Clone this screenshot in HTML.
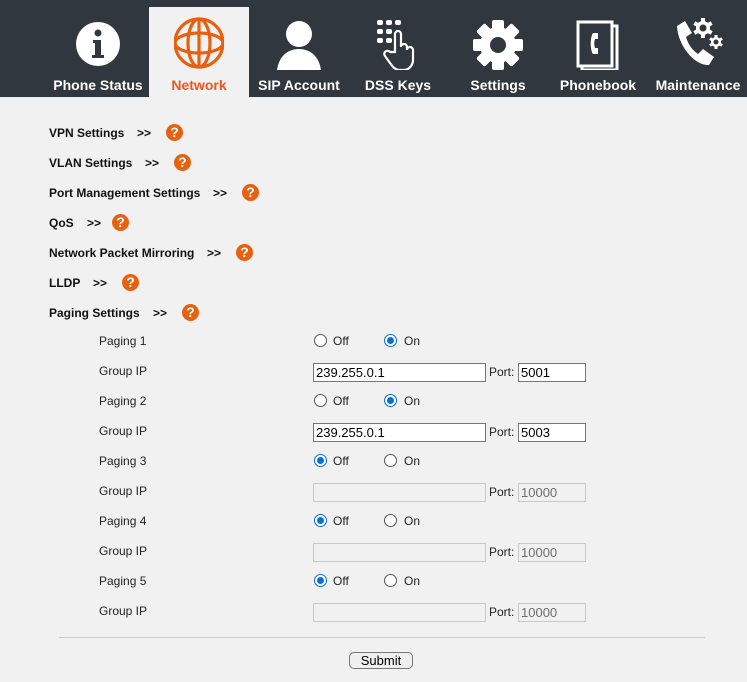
<!DOCTYPE html>
<html><head><meta charset="utf-8"><style>
*{margin:0;padding:0;box-sizing:border-box}
body{width:747px;height:682px;background:#f1f1f1;font-family:"Liberation Sans",Arial,sans-serif;position:relative;overflow:hidden}
.hdr{position:absolute;left:0;top:0;width:747px;height:97px;background:#31373f}
.tab{position:absolute;top:7px;width:100px;height:90px;text-align:center}
.tab.act{background:#f1f1f1}
.tab .lb{position:absolute;left:-10px;right:-10px;top:70px;font-size:14px;font-weight:bold;color:#fff}
.tab.act .lb{color:#f2561d}
.tab svg{position:absolute;left:25px;top:7px}
.a{position:absolute;white-space:nowrap}
.lk{font-size:12px;font-weight:bold;color:#111}
.q{position:absolute;width:17px;height:17px;border-radius:50%;background:#e9600f;color:#fff;font-weight:bold;font-size:14px;text-align:center;line-height:17px}
.lbl{font-size:12px;color:#222}
.r{position:absolute;width:13px;height:13px;border-radius:50%;border:1px solid #555;background:#fff}
.r.on{border:1px solid #0a6fd4}
.r.on::after{content:"";position:absolute;left:2px;top:2px;width:7px;height:7px;border-radius:50%;background:#0a6fd4}
.in{position:absolute;height:19px;border:1px solid #767676;background:#fff;font-size:13px;padding-left:2px;line-height:17px;color:#000}
.in.dis{border-color:#c8c8c8;background:#f0f0f0;color:#6d6d6d}
</style></head><body>
<div class="hdr">
<div class="tab" style="left:48px"><svg width="50" height="56" viewBox="0 0 50 56"><circle cx="25" cy="30" r="22" fill="#fff"/><circle cx="25" cy="19" r="3.5" fill="#31373f"/><path d="M20 26h8v15h3v3H19v-3h3V29h-2z" fill="#31373f"/></svg><div class="lb">Phone Status</div></div>
<div class="tab act" style="left:149px"><svg width="50" height="56" viewBox="0 0 50 56"><g fill="none" stroke="#e8600f" stroke-width="3.2"><circle cx="25" cy="34" r="24" transform="translate(0,-5)"/><ellipse cx="25" cy="29" rx="11" ry="24"/><ellipse cx="25" cy="29" rx="24" ry="10"/><line x1="25" y1="5" x2="25" y2="53"/></g></svg><div class="lb">Network</div></div>
<div class="tab" style="left:249px"><svg width="50" height="56" viewBox="0 0 50 56"><circle cx="25" cy="20" r="13" fill="#fff"/><path d="M3 56c2-14 11-21 22-21s20 7 22 21z" fill="#fff"/></svg><div class="lb">SIP Account</div></div>
<div class="tab" style="left:348px"><svg width="50" height="56" viewBox="0 0 50 56"><g fill="#fff"><rect x="4" y="6" width="6" height="5" rx="2"/><rect x="13" y="6" width="6" height="5" rx="2"/><rect x="22" y="6" width="6" height="5" rx="2"/><rect x="4" y="15" width="6" height="5" rx="2"/><rect x="13" y="15" width="6" height="5" rx="2"/><rect x="4" y="24" width="6" height="5" rx="2"/><rect x="13" y="24" width="6" height="5" rx="2"/></g><path d="M22 38V20a3 3 0 016 0v13a3 3 0 016 0v3a3 3 0 016 0v10c0 5-4 10-9 10h-4c-5 0-7-3-10-7l-5-7a3 3 0 015-4z" fill="none" stroke="#fff" stroke-width="2.2"/></svg><div class="lb">DSS Keys</div></div>
<div class="tab" style="left:448px"><svg width="50" height="56" viewBox="0 0 50 56"><g transform="translate(25,31)"><g fill="#fff"><circle r="18"/><rect x="-6" y="-25" width="12" height="50" rx="2"/><rect x="-6" y="-25" width="12" height="50" rx="2" transform="rotate(45)"/><rect x="-6" y="-25" width="12" height="50" rx="2" transform="rotate(90)"/><rect x="-6" y="-25" width="12" height="50" rx="2" transform="rotate(135)"/></g><circle r="8" fill="#31373f"/></g></svg><div class="lb">Settings</div></div>
<div class="tab" style="left:548px"><svg width="50" height="56" viewBox="0 0 50 56"><path d="M5 8h34v44H5z" fill="none" stroke="#fff" stroke-width="3"/><path d="M39 12h5v44H9v-4" fill="none" stroke="#fff" stroke-width="3"/><path d="M25 19h-5c-3 4-3 17 0 21h5v-6h-3c-1-3-1-6 0-9h3z" fill="#fff"/></svg><div class="lb">Phonebook</div></div>
<div class="tab" style="left:648px"><svg width="50" height="56" viewBox="0 0 50 56"><path d="M4 12l8-5 7 12-6 4c2 7 6 13 12 17l5-5 11 8-5 8C22 52 5 32 4 12z" fill="#fff"/><g transform="translate(30,14)"><circle r="7" fill="#fff"/><g fill="#fff"><rect x="-2" y="-10" width="4" height="20"/><rect x="-2" y="-10" width="4" height="20" transform="rotate(60)"/><rect x="-2" y="-10" width="4" height="20" transform="rotate(120)"/></g><circle r="3.5" fill="#31373f"/></g><g transform="translate(43,28)"><circle r="5" fill="#fff"/><g fill="#fff"><rect x="-1.5" y="-7" width="3" height="14"/><rect x="-1.5" y="-7" width="3" height="14" transform="rotate(60)"/><rect x="-1.5" y="-7" width="3" height="14" transform="rotate(120)"/></g><circle r="2.5" fill="#31373f"/></g></svg><div class="lb">Maintenance</div></div>
</div>

<div class="a lk" style="left:49px;top:126px">VPN Settings</div><div class="a lk" style="left:137px;top:126px">&gt;&gt;</div><div class="q" style="left:166px;top:124px">?</div>
<div class="a lk" style="left:49px;top:156px">VLAN Settings</div><div class="a lk" style="left:145px;top:156px">&gt;&gt;</div><div class="q" style="left:174px;top:154px">?</div>
<div class="a lk" style="left:49px;top:186px">Port Management Settings</div><div class="a lk" style="left:213px;top:186px">&gt;&gt;</div><div class="q" style="left:242px;top:184px">?</div>
<div class="a lk" style="left:49px;top:216px">QoS</div><div class="a lk" style="left:87px;top:216px">&gt;&gt;</div><div class="q" style="left:112px;top:214px">?</div>
<div class="a lk" style="left:49px;top:246px">Network Packet Mirroring</div><div class="a lk" style="left:207px;top:246px">&gt;&gt;</div><div class="q" style="left:236px;top:244px">?</div>
<div class="a lk" style="left:49px;top:276px">LLDP</div><div class="a lk" style="left:93px;top:276px">&gt;&gt;</div><div class="q" style="left:122px;top:274px">?</div>
<div class="a lk" style="left:49px;top:306px">Paging Settings</div><div class="a lk" style="left:153px;top:306px">&gt;&gt;</div><div class="q" style="left:182px;top:304px">?</div>

<div class="a lbl" style="left:99px;top:334px">Paging 1</div><div class="r" style="left:314px;top:334px"></div><div class="a lbl" style="left:333px;top:334px">Off</div><div class="r on" style="left:384px;top:334px"></div><div class="a lbl" style="left:404px;top:334px">On</div>
<div class="a lbl" style="left:99px;top:364px">Group IP</div><div class="in" style="left:313px;top:363px;width:173px">239.255.0.1</div><div class="a lbl" style="left:489px;top:365px">Port:</div><div class="in" style="left:518px;top:363px;width:68px">5001</div>
<div class="a lbl" style="left:99px;top:394px">Paging 2</div><div class="r" style="left:314px;top:394px"></div><div class="a lbl" style="left:333px;top:394px">Off</div><div class="r on" style="left:384px;top:394px"></div><div class="a lbl" style="left:404px;top:394px">On</div>
<div class="a lbl" style="left:99px;top:424px">Group IP</div><div class="in" style="left:313px;top:423px;width:173px">239.255.0.1</div><div class="a lbl" style="left:489px;top:425px">Port:</div><div class="in" style="left:518px;top:423px;width:68px">5003</div>
<div class="a lbl" style="left:99px;top:454px">Paging 3</div><div class="r on" style="left:314px;top:454px"></div><div class="a lbl" style="left:333px;top:454px">Off</div><div class="r" style="left:384px;top:454px"></div><div class="a lbl" style="left:404px;top:454px">On</div>
<div class="a lbl" style="left:99px;top:484px">Group IP</div><div class="in dis" style="left:313px;top:483px;width:173px"></div><div class="a lbl" style="left:489px;top:485px">Port:</div><div class="in dis" style="left:518px;top:483px;width:68px">10000</div>
<div class="a lbl" style="left:99px;top:514px">Paging 4</div><div class="r on" style="left:314px;top:514px"></div><div class="a lbl" style="left:333px;top:514px">Off</div><div class="r" style="left:384px;top:514px"></div><div class="a lbl" style="left:404px;top:514px">On</div>
<div class="a lbl" style="left:99px;top:544px">Group IP</div><div class="in dis" style="left:313px;top:543px;width:173px"></div><div class="a lbl" style="left:489px;top:545px">Port:</div><div class="in dis" style="left:518px;top:543px;width:68px">10000</div>
<div class="a lbl" style="left:99px;top:574px">Paging 5</div><div class="r on" style="left:314px;top:574px"></div><div class="a lbl" style="left:333px;top:574px">Off</div><div class="r" style="left:384px;top:574px"></div><div class="a lbl" style="left:404px;top:574px">On</div>
<div class="a lbl" style="left:99px;top:604px">Group IP</div><div class="in dis" style="left:313px;top:603px;width:173px"></div><div class="a lbl" style="left:489px;top:605px">Port:</div><div class="in dis" style="left:518px;top:603px;width:68px">10000</div>

<div class="a" style="left:59px;top:637px;width:646px;height:1px;background:#c8c8c8"></div>
<div class="a" style="left:349px;top:652px;width:64px;height:17px;border:1px solid #767676;border-radius:5px;background:#efefef;font-size:13px;text-align:center;line-height:15px;color:#000">Submit</div>
</body></html>
